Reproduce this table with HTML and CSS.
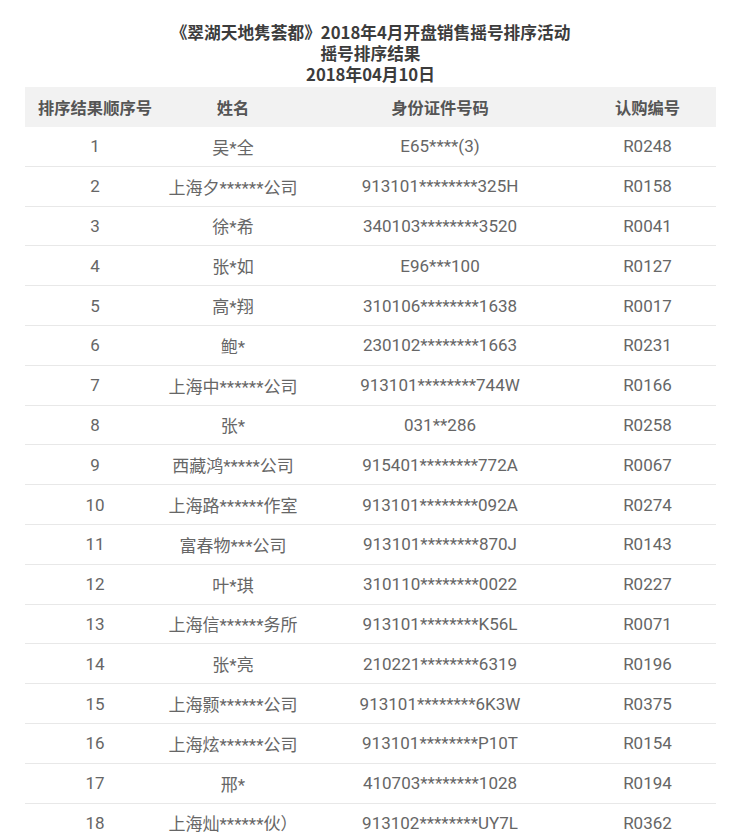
FILE: index.html
```html
<!DOCTYPE html>
<html lang="zh-CN">
<head>
<meta charset="utf-8">
<title>摇号排序结果</title>
<link rel="stylesheet" href="styles.css">
</head>
<body>
<div class="page">
  <div class="title">
    <div>《翠湖天地隽荟都》2018年4月开盘销售摇号排序活动</div>
    <div>摇号排序结果</div>
    <div>2018年04月10日</div>
  </div>
  <table class="result">
    <thead>
      <tr><th class="c1">排序结果顺序号</th><th class="c2">姓名</th><th class="c3">身份证件号码</th><th class="c4">认购编号</th></tr>
    </thead>
    <tbody>
      <tr><td>1</td><td>吴*全</td><td>E65****(3)</td><td>R0248</td></tr>
      <tr><td>2</td><td>上海夕******公司</td><td>913101********325H</td><td>R0158</td></tr>
      <tr><td>3</td><td>徐*希</td><td>340103********3520</td><td>R0041</td></tr>
      <tr><td>4</td><td>张*如</td><td>E96***100</td><td>R0127</td></tr>
      <tr><td>5</td><td>高*翔</td><td>310106********1638</td><td>R0017</td></tr>
      <tr><td>6</td><td>鲍*</td><td>230102********1663</td><td>R0231</td></tr>
      <tr><td>7</td><td>上海中******公司</td><td>913101********744W</td><td>R0166</td></tr>
      <tr><td>8</td><td>张*</td><td>031**286</td><td>R0258</td></tr>
      <tr><td>9</td><td>西藏鸿*****公司</td><td>915401********772A</td><td>R0067</td></tr>
      <tr><td>10</td><td>上海路******作室</td><td>913101********092A</td><td>R0274</td></tr>
      <tr><td>11</td><td>富春物***公司</td><td>913101********870J</td><td>R0143</td></tr>
      <tr><td>12</td><td>叶*琪</td><td>310110********0022</td><td>R0227</td></tr>
      <tr><td>13</td><td>上海信******务所</td><td>913101********K56L</td><td>R0071</td></tr>
      <tr><td>14</td><td>张*亮</td><td>210221********6319</td><td>R0196</td></tr>
      <tr><td>15</td><td>上海颢******公司</td><td>913101********6K3W</td><td>R0375</td></tr>
      <tr><td>16</td><td>上海炫******公司</td><td>913101********P10T</td><td>R0154</td></tr>
      <tr><td>17</td><td>邢*</td><td>410703********1028</td><td>R0194</td></tr>
      <tr><td>18</td><td>上海灿******伙）</td><td>913102********UY7L</td><td>R0362</td></tr>
    </tbody>
  </table>
</div>
</body>
</html>
```

FILE: styles.css
```css
html, body {
  margin: 0;
  padding: 0;
  background: #ffffff;
}
body {
  font-family: Roboto, "Noto Sans CJK SC", sans-serif;
  color: #666666;
}
.page {
  width: 691px;
  margin: 0 0 0 25px;
  padding-top: 22px;
}
.title {
  text-align: center;
  font-family: "Noto Sans CJK SC", sans-serif;
  font-weight: 700;
  font-size: 16.7px;
  line-height: 21px;
  color: #3c3c3c;
  padding-bottom: 2px;
  white-space: nowrap;
}
.result {
  width: 691px;
  border-collapse: collapse;
  table-layout: fixed;
}
.result th {
  background: #f2f2f2;
  height: 40px;
  padding: 0;
  font-family: "Noto Sans CJK SC", sans-serif;
  font-weight: 700;
  font-size: 16.3px;
  color: #555555;
  text-align: center;
  white-space: nowrap;
}
.result .c1 { width: 140px; }
.result .c2 { width: 136px; }
.result .c3 { width: 278px; }
.result .c4 { width: 137px; }
.result td {
  height: 38.8px;
  padding: 0;
  text-align: center;
  font-size: 17px;
  color: #666666;
  border-bottom: 1px solid #e8e8e8;
  white-space: nowrap;
}
```
